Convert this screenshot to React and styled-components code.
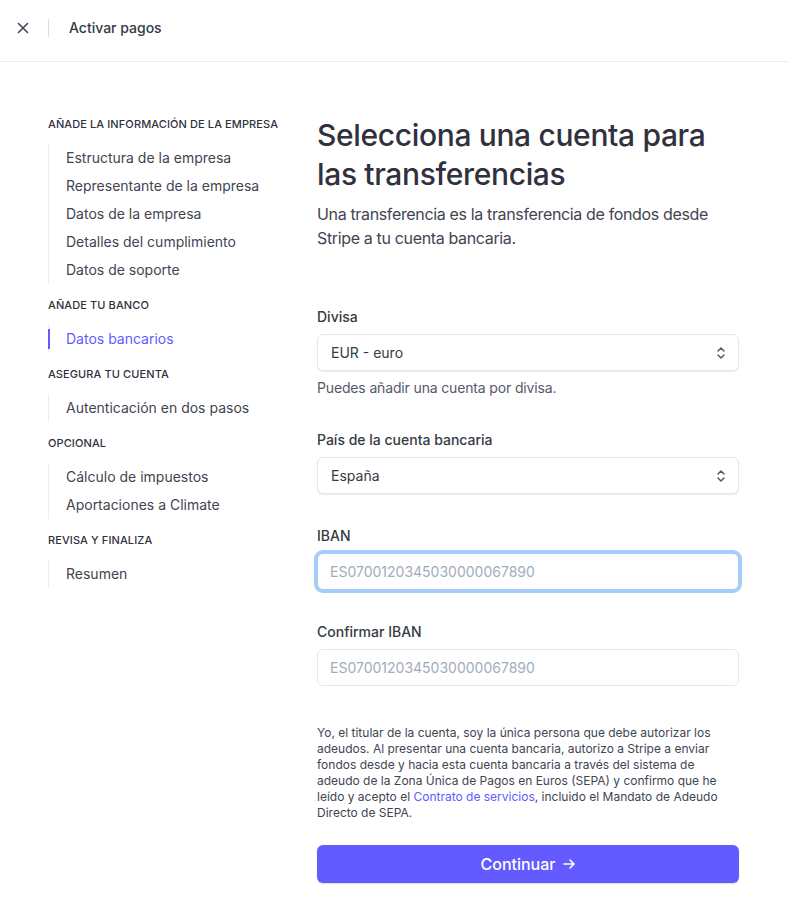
import React from "react";
import styled, { createGlobalStyle } from "styled-components";

const Global = createGlobalStyle`
  * { box-sizing: border-box; }
  html, body { margin: 0; padding: 0; background: #ffffff; }
  body {
    font-family: Inter, "Noto Sans", "Liberation Sans", sans-serif;
    color: #353a44;
    -webkit-font-smoothing: antialiased;
  }
`;

const Page = styled.div`
  width: 789px;
  min-height: 904px;
  background: #fff;
`;

const TopBar = styled.header`
  height: 62px;
  display: flex;
  align-items: center;
  border-bottom: 1px solid #ebeef1;
  padding: 0 0 6px 16px;
`;

const CloseButton = styled.button`
  width: 14px;
  height: 14px;
  padding: 0;
  border: 0;
  background: none;
  display: flex;
  align-items: center;
  justify-content: center;
  color: #414552;
  cursor: pointer;
`;

const Divider = styled.span`
  width: 1px;
  height: 18px;
  background: #d8dee4;
  margin: 0 20px 0 18px;
`;

const TopTitle = styled.span`
  font-size: 14px;
  font-weight: 500;
  color: #353a44;
`;

const Body = styled.div`
  display: grid;
  grid-template-columns: 269px 422px;
  padding: 54px 48px 0 48px;
`;

const Nav = styled.nav`
  display: flex;
  flex-direction: column;
`;

const NavSection = styled.div`
  display: flex;
  flex-direction: column;
  margin-bottom: 13px;
`;

const SectionTitle = styled.div`
  font-size: 11px;
  line-height: 16px;
  font-weight: 500;
  letter-spacing: 0.1px;
  text-transform: uppercase;
  color: #30313d;
  margin-bottom: 12px;
`;

const NavList = styled.ul`
  list-style: none;
  margin: 0;
  padding: 0;
  border-left: 1px solid #ebeef1;
`;

const NavItem = styled.li`
  position: relative;
  font-size: 14px;
  line-height: 28px;
  padding-left: 17px;
  color: ${(p) => (p.$active ? "#635bff" : "#414552")};
  &::before {
    content: "";
    display: ${(p) => (p.$active ? "block" : "none")};
    position: absolute;
    left: -1px;
    top: 4px;
    bottom: 4px;
    width: 2px;
    background: #635bff;
  }
`;

const Main = styled.main`
  display: flex;
  flex-direction: column;
`;

const Title = styled.h1`
  margin: 0;
  font-size: 30px;
  line-height: 39px;
  font-weight: 500;
  letter-spacing: -0.35px;
  color: #30313d;
`;

const Lead = styled.p`
  margin: 8px 0 0;
  font-size: 16px;
  line-height: 24px;
  color: #414552;
  letter-spacing: -0.35px;
`;

const Form = styled.form`
  display: flex;
  flex-direction: column;
  margin-top: 57px;
`;

const Field = styled.div`
  display: flex;
  flex-direction: column;
  margin-bottom: 32px;
`;

const Label = styled.label`
  font-size: 14px;
  line-height: 20px;
  font-weight: 500;
  color: #353a44;
  margin-bottom: 7px;
`;

const SelectBox = styled.div`
  height: 37px;
  display: flex;
  align-items: center;
  justify-content: space-between;
  padding: 0 12px 0 13px;
  border-radius: 6px;
  border: 1px solid #e3e8ee;
  box-shadow: 0 1px 1px rgba(0, 0, 0, 0.08);
  font-size: 14px;
  color: #353a44;
  background: #fff;
`;

const Input = styled.input`
  height: 37px;
  width: 100%;
  padding: 0 12px;
  border-radius: 6px;
  font-family: inherit;
  font-size: 14px;
  color: #353a44;
  background: #fff;
  border: 1px solid ${(p) => (p.$focused ? "#a4cafe" : "#e3e8ee")};
  box-shadow: ${(p) => (p.$focused ? "0 0 0 3px #a7ccf6" : "none")};
  outline: none;
  &::placeholder { color: #a3acba; }
`;

const Help = styled.div`
  font-size: 14px;
  line-height: 20px;
  color: #545969;
  letter-spacing: -0.15px;
  margin-top: 7px;
`;

const Legal = styled.p`
  margin: 7px 0 0;
  font-size: 12px;
  line-height: 16px;
  color: #414552;
  letter-spacing: 0;
`;

const Link = styled.a`
  color: #635bff;
  text-decoration: none;
`;

const PrimaryButton = styled.button`
  margin-top: 24px;
  height: 38px;
  border: 0;
  border-radius: 6px;
  background: #635bff;
  color: #fff;
  font-family: inherit;
  font-size: 16px;
  font-weight: 500;
  display: flex;
  align-items: center;
  justify-content: center;
  gap: 6px;
  box-shadow: 0 1px 1px rgba(0, 0, 0, 0.12);
`;

const Chevrons = () => (
  <svg width="10" height="14" viewBox="0 0 10 14" fill="none" stroke="#545969" strokeWidth="1.5" strokeLinecap="round" strokeLinejoin="round">
    <path d="M2 5 L5 2 L8 5" />
    <path d="M2 9 L5 12 L8 9" />
  </svg>
);

const sections = [
  {
    title: "Añade la información de la empresa",
    items: [
      "Estructura de la empresa",
      "Representante de la empresa",
      "Datos de la empresa",
      "Detalles del cumplimiento",
      "Datos de soporte",
    ],
  },
  { title: "Añade tu banco", items: ["Datos bancarios"], active: 0 },
  { title: "Asegura tu cuenta", items: ["Autenticación en dos pasos"] },
  { title: "Opcional", items: ["Cálculo de impuestos", "Aportaciones a Climate"] },
  { title: "Revisa y finaliza", items: ["Resumen"] },
];

export default function App() {
  return (
    <Page>
      <Global />
      <TopBar>
        <CloseButton aria-label="Cerrar">
          <svg width="12" height="12" viewBox="0 0 12 12" stroke="#414552" strokeWidth="1.6" strokeLinecap="round">
            <path d="M1.5 1.5 L10.5 10.5 M10.5 1.5 L1.5 10.5" />
          </svg>
        </CloseButton>
        <Divider />
        <TopTitle>Activar pagos</TopTitle>
      </TopBar>
      <Body>
        <Nav>
          {sections.map((s) => (
            <NavSection key={s.title}>
              <SectionTitle>{s.title}</SectionTitle>
              <NavList>
                {s.items.map((it, i) => (
                  <NavItem key={it} $active={s.active === i}>
                    {it}
                  </NavItem>
                ))}
              </NavList>
            </NavSection>
          ))}
        </Nav>
        <Main>
          <Title>Selecciona una cuenta para las transferencias</Title>
          <Lead>
            Una transferencia es la transferencia de fondos desde Stripe a tu cuenta bancaria.
          </Lead>
          <Form onSubmit={(e) => e.preventDefault()}>
            <Field>
              <Label>Divisa</Label>
              <SelectBox>
                <span>EUR - euro</span>
                <Chevrons />
              </SelectBox>
              <Help>Puedes añadir una cuenta por divisa.</Help>
            </Field>
            <Field>
              <Label>País de la cuenta bancaria</Label>
              <SelectBox>
                <span>España</span>
                <Chevrons />
              </SelectBox>
            </Field>
            <Field>
              <Label>IBAN</Label>
              <Input $focused placeholder="ES0700120345030000067890" />
            </Field>
            <Field>
              <Label>Confirmar IBAN</Label>
              <Input placeholder="ES0700120345030000067890" />
            </Field>
            <Legal>
              Yo, el titular de la cuenta, soy la única persona que debe autorizar los adeudos. Al
              presentar una cuenta bancaria, autorizo a Stripe a enviar fondos desde y hacia esta
              cuenta bancaria a través del sistema de adeudo de la Zona Única de Pagos en Euros
              (SEPA) y confirmo que he leído y acepto el{" "}
              <Link href="#">Contrato de servicios</Link>, incluido el Mandato de Adeudo Directo de
              SEPA.
            </Legal>
            <PrimaryButton type="submit">
              Continuar
              <svg width="14" height="14" viewBox="0 0 14 14" fill="none" stroke="#fff" strokeWidth="1.6" strokeLinecap="round" strokeLinejoin="round">
                <path d="M2 7 H12 M8 3 L12 7 L8 11" />
              </svg>
            </PrimaryButton>
          </Form>
        </Main>
      </Body>
    </Page>
  );
}
